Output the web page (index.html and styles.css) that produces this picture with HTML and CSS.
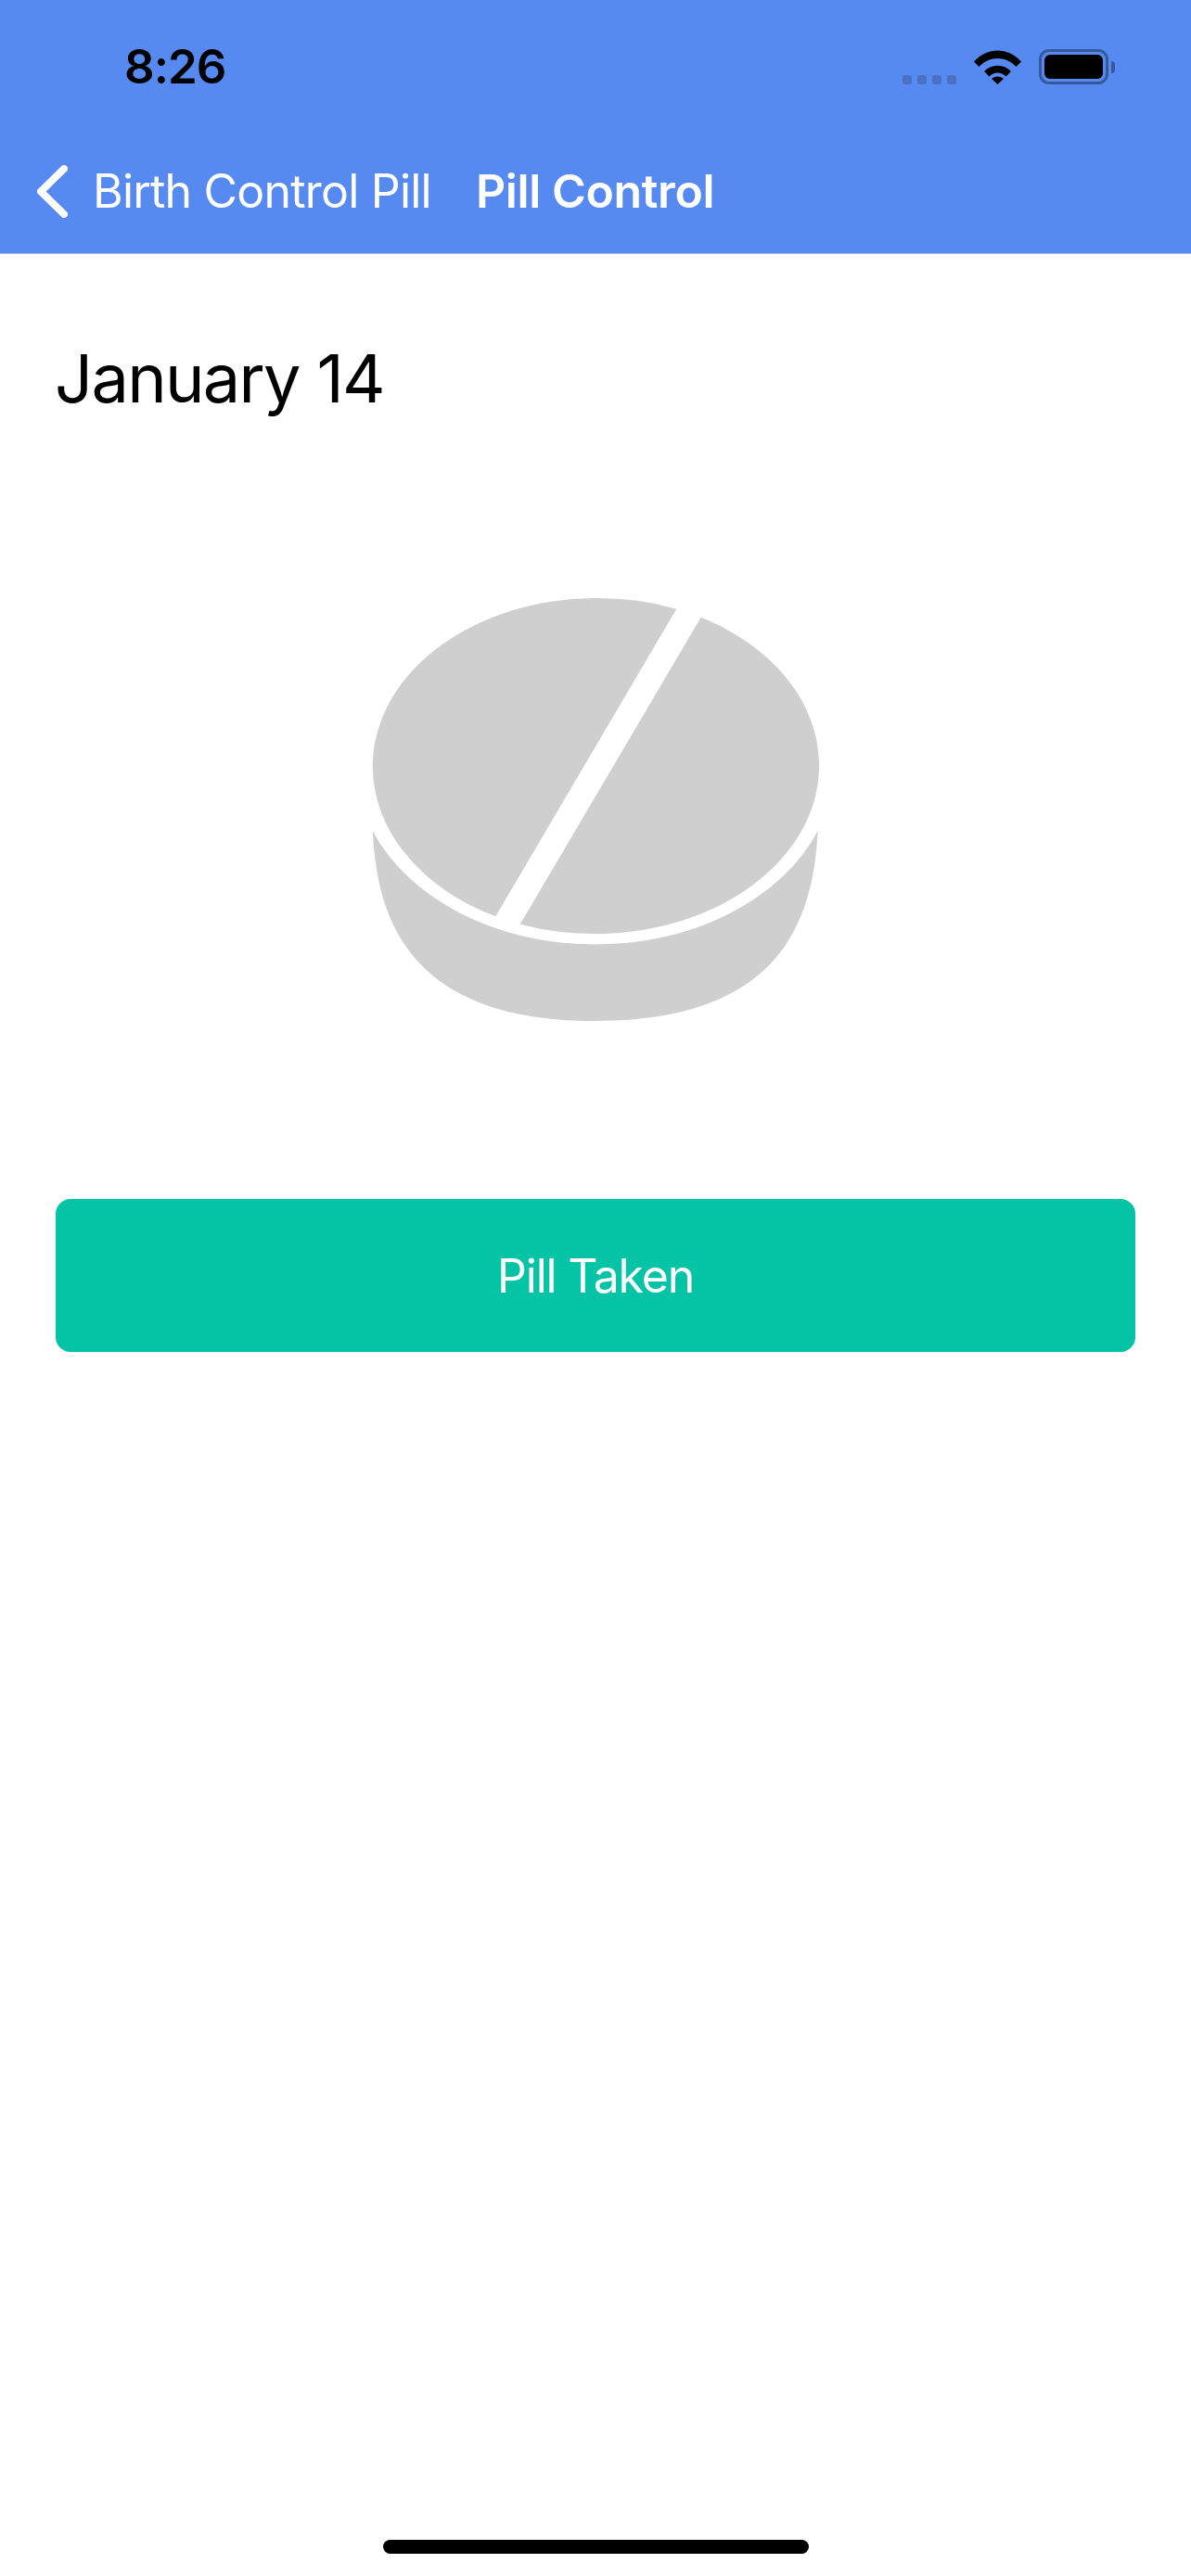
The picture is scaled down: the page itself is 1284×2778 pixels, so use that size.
FILE: index.html
```html
<!DOCTYPE html>
<html lang="en">
<head>
    <meta charset="UTF-8">
    <title>Pill Control</title>
    <link rel="stylesheet" href="styles.css">
</head>
<body>
    <div class="app">
        <header class="header">
            <div class="status-bar">
                <span class="time">8:26</span>
                <div class="status-icons">
                    <div class="signal">
                        <span class="dot"></span>
                        <span class="dot"></span>
                        <span class="dot"></span>
                        <span class="dot"></span>
                    </div>
                    <svg class="wifi" width="51" height="37" viewBox="0 0 51 37">
                        <path d="M0 12.5C14-3.5 37-3.5 51 12.5L45.5 18C34.5 6 16.5 6 5.500 18Z"/>
                        <path d="M11 23C19 14.500 32 14.500 40 23L34.500 28.500C29.500 23 21.500 23 16.500 28.500Z"/>
                        <path d="M19 31C22.500 27.500 28.500 27.500 32 31L25.500 37Z"/>
                    </svg>
                    <div class="battery">
                        <div class="battery-body"><div class="battery-fill"></div></div>
                        <span class="battery-nub"></span>
                    </div>
                </div>
            </div>
            <nav class="nav">
                <svg class="back-icon" width="33" height="57" viewBox="0 0 33 57">
                    <path d="M29 4L4 28.500L29 53"/>
                </svg>
                <span class="back-label">Birth Control Pill</span>
                <span class="nav-title">Pill Control</span>
            </nav>
        </header>

        <main class="content">
            <h1 class="date">January 14</h1>
            <div class="pill-wrap">
                <svg class="pill" width="520" height="500" viewBox="2 0 520 500">
                    <path d="M349.300 36.700L154.300 368.300A241.700 181.500 0 0 1 349.300 36.700Z"/>
                    <path d="M375.700 45.700A241.700 181.500 0 0 1 180.700 376.700Z"/>
                    <path d="M21.700 276A258 193.500 0 0 0 501.700 276C496.700 366.700 466.700 481 261.700 481C56.700 481 26.700 366.700 21.700 276Z"/>
                </svg>
            </div>
            <button class="taken-btn">Pill Taken</button>
        </main>

        <div class="home-indicator"></div>
    </div>
</body>
</html>
```

FILE: styles.css
```css
* {
    box-sizing: border-box;
}
body {
    margin: 0;
    background-color: #ffffff;
    font-family: Inter, 'Noto Sans', sans-serif;
    color: #000000;
}
.app {
    display: flex;
    flex-direction: column;
    height: 2778px;
    overflow: hidden;
}
.header {
    height: 274px;
    background-color: #568af0;
    border-bottom: 1px solid #a9bfe9;
}
.status-bar {
    display: flex;
    justify-content: space-between;
    align-items: flex-start;
    height: 178px;
    padding: 41px 82px 0 134px;
}
.time {
    font-size: 51px;
    line-height: 62px;
    font-weight: 600;
    letter-spacing: -1px;
}
.status-icons {
    display: flex;
    align-items: flex-end;
    margin-top: 12px;
}
.signal {
    display: flex;
    gap: 6px;
    margin-right: 19px;
}
.dot {
    width: 10px;
    height: 10px;
    border-radius: 3px;
    background-color: #4a72c2;
}
.wifi {
    display: block;
    margin-right: 19px;
}
.battery {
    display: flex;
    align-items: center;
}
.battery-body {
    width: 75px;
    height: 38px;
    padding: 3px;
    border: 3px solid #36589c;
    border-radius: 11px;
}
.battery-fill {
    width: 100%;
    height: 100%;
    border-radius: 6px;
    background-color: #000000;
}
.battery-nub {
    width: 4px;
    height: 13px;
    margin-left: 3px;
    border-radius: 0 7px 7px 0;
    background-color: #36589c;
}
.nav {
    display: flex;
    align-items: center;
    height: 57px;
    padding-left: 40px;
    color: #ffffff;
    font-size: 50px;
    line-height: 57px;
}
.back-icon {
    flex: none;
    fill: none;
    stroke: #ffffff;
    stroke-width: 8;
    stroke-linecap: round;
    stroke-linejoin: round;
}
.back-label {
    margin-left: 27px;
    width: 413px;
    white-space: nowrap;
    letter-spacing: -0.8px;
}
.nav-title {
    font-weight: 600;
    white-space: nowrap;
    letter-spacing: -0.4px;
}
.content {
    display: flex;
    flex-direction: column;
    padding: 0 60px;
}
.date {
    margin: 90px 0 0 -1px;
    font-size: 72px;
    line-height: 88px;
    font-weight: 400;
    letter-spacing: -1.7px;
}
.pill-wrap {
    display: flex;
    justify-content: center;
    margin-top: 168px;
}
.pill {
    display: block;
    fill: #cfcfcf;
}
.taken-btn {
    height: 165px;
    margin-top: 173px;
    border: none;
    border-radius: 16px;
    background-color: #05c3a5;
    color: #ffffff;
    font-family: Inter, 'Noto Sans', sans-serif;
    font-size: 50px;
    font-weight: 400;
    letter-spacing: -1.2px;
}
.home-indicator {
    width: 459px;
    height: 15px;
    margin: auto auto 24px;
    border-radius: 8px;
    background-color: #000000;
}
```
